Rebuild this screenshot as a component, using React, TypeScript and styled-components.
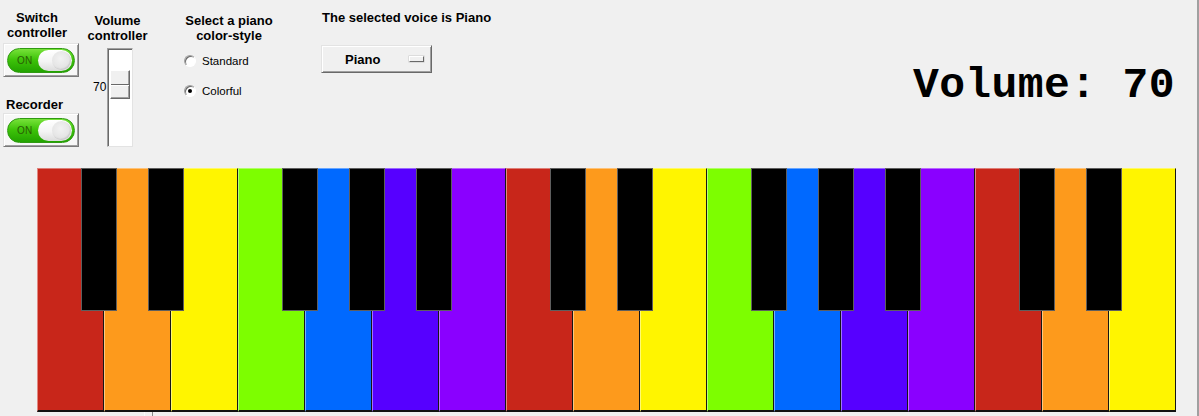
import React from "react";
import styled, { createGlobalStyle } from "styled-components";

const GlobalStyle = createGlobalStyle`
  html, body { margin: 0; padding: 0; background: #f0f0f0; }
  body {
    width: 1199px;
    height: 416px;
    overflow: hidden;
    font-family: "Liberation Sans", Arial, sans-serif;
    color: #000;
  }
`;

const Window = styled.div`
  width: 1197px;
  height: 416px;
  border-right: 2px solid #a0a0a0;
  background: #f0f0f0;
  display: flex;
  flex-direction: column;
  overflow: hidden;
`;

const TopBar = styled.div`
  height: 168px;
  flex: none;
  display: flex;
  align-items: flex-start;
`;

const Column = styled.div<{ $ml: number; $w?: number }>`
  margin-left: ${(p) => p.$ml}px;
  width: ${(p) => (p.$w ? `${p.$w}px` : "auto")};
  display: flex;
  flex-direction: column;
  align-items: flex-start;
`;

const BoldLabel = styled.div<{ $mt: number; $w?: number; $center?: boolean; $pl?: number }>`
  margin-top: ${(p) => p.$mt}px;
  width: ${(p) => (p.$w ? `${p.$w}px` : "auto")};
  padding-left: ${(p) => p.$pl || 0}px;
  text-align: ${(p) => (p.$center ? "center" : "left")};
  font-weight: bold;
  font-size: 13px;
  line-height: 15px;
  white-space: pre-line;
`;

/* ---------- toggle ---------- */
const ToggleBox = styled.div<{ $mt: number }>`
  margin-top: ${(p) => p.$mt}px;
  width: 76px;
  height: 34px;
  box-sizing: border-box;
  border: 1px solid;
  border-color: #e3e3e3 #7a7a7a #7a7a7a #e3e3e3;
  box-shadow: inset 1px 1px #ffffff, inset -1px -1px #a0a0a0;
  background: #f7f7f7;
  display: flex;
  align-items: center;
  justify-content: center;
`;

const Pill = styled.div`
  width: 68px;
  height: 25px;
  box-sizing: border-box;
  border-radius: 13px;
  border: 1px solid #2f9a12;
  background: linear-gradient(#78e23a 0%, #3fc40a 45%, #22a300 100%);
  display: flex;
  align-items: center;
  padding: 0 2px 0 9px;
  gap: 6px;
`;

const PillText = styled.span`
  font-family: "Liberation Sans", Arial, sans-serif;
  font-size: 10px;
  color: #2a5c05;
  letter-spacing: 0.3px;
  width: 15px;
`;

const Knob = styled.div`
  width: 35px;
  height: 21px;
  border-radius: 11px;
  background: linear-gradient(#ffffff 0%, #f4f4f4 55%, #dcdcdc 100%);
  display: flex;
  justify-content: flex-end;
  align-items: center;
  padding-right: 1px;
  box-sizing: border-box;
`;

const KnobDot = styled.div`
  width: 19px;
  height: 19px;
  border-radius: 50%;
  background: radial-gradient(circle at 45% 40%, #f2f2f2 0%, #e6e6e6 55%, #c9c9c9 100%);
  box-shadow: inset -1px -1px 1px rgba(0,0,0,0.08);
`;

const Toggle = ({ mt }: { mt: number }) => (
  <ToggleBox $mt={mt}>
    <Pill>
      <PillText>ON</PillText>
      <Knob>
        <KnobDot />
      </Knob>
    </Pill>
  </ToggleBox>
);

/* ---------- slider ---------- */
const SliderRow = styled.div`
  margin-top: 5px;
  display: flex;
  align-items: flex-start;
`;

const ValueText = styled.div`
  margin-left: 6px;
  margin-top: 32px;
  width: 14px;
  font-size: 12px;
  line-height: 14px;
`;

const Trough = styled.div`
  position: relative;
  width: 26px;
  height: 99px;
  box-sizing: border-box;
  border: 1px solid;
  border-color: #a0a0a0 #e3e3e3 #e3e3e3 #a0a0a0;
  box-shadow: inset 1px 1px #696969;
  background: #ffffff;
`;

const Thumb = styled.div`
  position: absolute;
  left: 2px;
  width: 20px;
  height: 29px;
  box-sizing: border-box;
  background: #f0f0f0;
  border: 1px solid;
  border-color: #ffffff #696969 #696969 #ffffff;
  box-shadow: inset -1px -1px #a0a0a0;
  &::after {
    content: "";
    position: absolute;
    left: 0;
    right: 0;
    top: 13px;
    height: 1px;
    background: #696969;
    border-bottom: 1px solid #ffffff;
  }
`;

const VolumeSlider = ({ value }: { value: number }) => {
  const travel = 99 - 2 - 4 - 29;
  const top = 2 + ((100 - value) / 100) * travel;
  return (
    <SliderRow>
      <ValueText>{value}</ValueText>
      <Trough>
        <Thumb style={{ top: `${top}px` }} />
      </Trough>
    </SliderRow>
  );
};

/* ---------- radio ---------- */
const RadioRow = styled.div<{ $mt: number }>`
  margin-top: ${(p) => p.$mt}px;
  height: 18px;
  padding-left: 7px;
  display: flex;
  align-items: center;
  gap: 6px;
`;

const RadioCircle = styled.div<{ $checked?: boolean }>`
  width: 12px;
  height: 12px;
  box-sizing: border-box;
  border-radius: 50%;
  border: 1px solid;
  border-color: #a0a0a0 #ffffff #ffffff #a0a0a0;
  box-shadow: inset 1px 1px #696969;
  background: #ffffff;
  display: flex;
  align-items: center;
  justify-content: center;
  &::after {
    content: "";
    width: 4px;
    height: 4px;
    border-radius: 50%;
    background: ${(p) => (p.$checked ? "#000" : "transparent")};
  }
`;

const RadioText = styled.span`
  font-size: 11.5px;
  line-height: 14px;
`;

/* ---------- dropdown ---------- */
const Dropdown = styled.div`
  margin-top: 20px;
  width: 111px;
  height: 28px;
  box-sizing: border-box;
  border: 1px solid;
  border-color: #e3e3e3 #696969 #696969 #e3e3e3;
  box-shadow: inset 1px 1px #ffffff, inset -1px -1px #a0a0a0;
  background: #f0f0f0;
  display: flex;
  align-items: center;
  padding: 0 7px 0 23px;
`;

const DropdownText = styled.span`
  flex: 1;
  font-weight: bold;
  font-size: 13px;
`;

const Indicator = styled.div`
  width: 15px;
  height: 6px;
  box-sizing: border-box;
  border: 1px solid;
  border-color: #ffffff #696969 #696969 #ffffff;
  background: #f0f0f0;
  box-shadow: 0 0 0 0.5px #c8c8c8;
`;

const VolumeDisplay = styled.div`
  margin-left: auto;
  margin-right: 22px;
  margin-top: 64px;
  font-family: "Liberation Mono", "Courier New", monospace;
  font-weight: bold;
  font-size: 43px;
  line-height: 43px;
  letter-spacing: 0.4px;
  white-space: pre;
`;

/* ---------- piano ---------- */
const PianoFrame = styled.div`
  position: relative;
  margin-left: 37px;
  width: 1139px;
  height: 244px;
  flex: none;
  display: flex;
`;

const WhiteKey = styled.div<{ $color: string }>`
  width: 67px;
  height: 100%;
  box-sizing: border-box;
  background: ${(p) => p.$color};
  border-left: 1px solid color-mix(in srgb, ${(p) => p.$color} 55%, #ffffff);
  border-top: 1px solid color-mix(in srgb, ${(p) => p.$color} 60%, #ffffff);
  border-right: 1px solid #161616;
  border-bottom: 2px solid #121212;
`;

const BlackKey = styled.div`
  position: absolute;
  top: 0;
  width: 36px;
  height: 143px;
  box-sizing: border-box;
  background: #000;
  border: 1px solid #5e5e5e;
`;

const BottomStrip = styled.div`
  flex: 1;
  display: flex;
`;

const Tick = styled.div`
  margin-left: 144px;
  width: 9px;
  box-sizing: border-box;
  border-left: 1px solid #fafafa;
  border-right: 1px solid #8a8a8a;
`;

const octave = ["#c8261a", "#fd9a1c", "#fff500", "#7dfe00", "#0069ff", "#5600ff", "#8a00ff"];
const whites = Array.from({ length: 17 }, (_, i) => octave[i % 7]);
const blackAfter = [0, 1, 3, 4, 5, 7, 8, 10, 11, 12, 14, 15];

export default function App() {
  return (
    <>
      <GlobalStyle />
      <Window>
        <TopBar>
          <Column $ml={3} $w={76}>
            <BoldLabel $mt={10} $w={68} $center>{"Switch\ncontroller"}</BoldLabel>
            <Toggle mt={3} />
            <BoldLabel $mt={20} $pl={3}>Recorder</BoldLabel>
            <Toggle mt={1} />
          </Column>
          <Column $ml={8} $w={61}>
            <BoldLabel $mt={13} $w={61} $center>{"Volume\ncontroller"}</BoldLabel>
            <VolumeSlider value={70} />
          </Column>
          <Column $ml={29} $w={104}>
            <BoldLabel $mt={13} $w={104} $center>{"Select a piano\ncolor-style"}</BoldLabel>
            <RadioRow $mt={9}>
              <RadioCircle />
              <RadioText>Standard</RadioText>
            </RadioRow>
            <RadioRow $mt={12}>
              <RadioCircle $checked />
              <RadioText>Colorful</RadioText>
            </RadioRow>
          </Column>
          <Column $ml={40}>
            <BoldLabel $mt={10} $pl={1}>The selected voice is Piano</BoldLabel>
            <Dropdown>
              <DropdownText>Piano</DropdownText>
              <Indicator />
            </Dropdown>
          </Column>
          <VolumeDisplay>Volume: 70</VolumeDisplay>
        </TopBar>
        <PianoFrame>
          {whites.map((c, i) => (
            <WhiteKey key={i} $color={c} />
          ))}
          {blackAfter.map((i) => (
            <BlackKey key={`b${i}`} style={{ left: `${67 * (i + 1) - 23}px` }} />
          ))}
        </PianoFrame>
        <BottomStrip>
          <Tick />
        </BottomStrip>
      </Window>
    </>
  );
}
